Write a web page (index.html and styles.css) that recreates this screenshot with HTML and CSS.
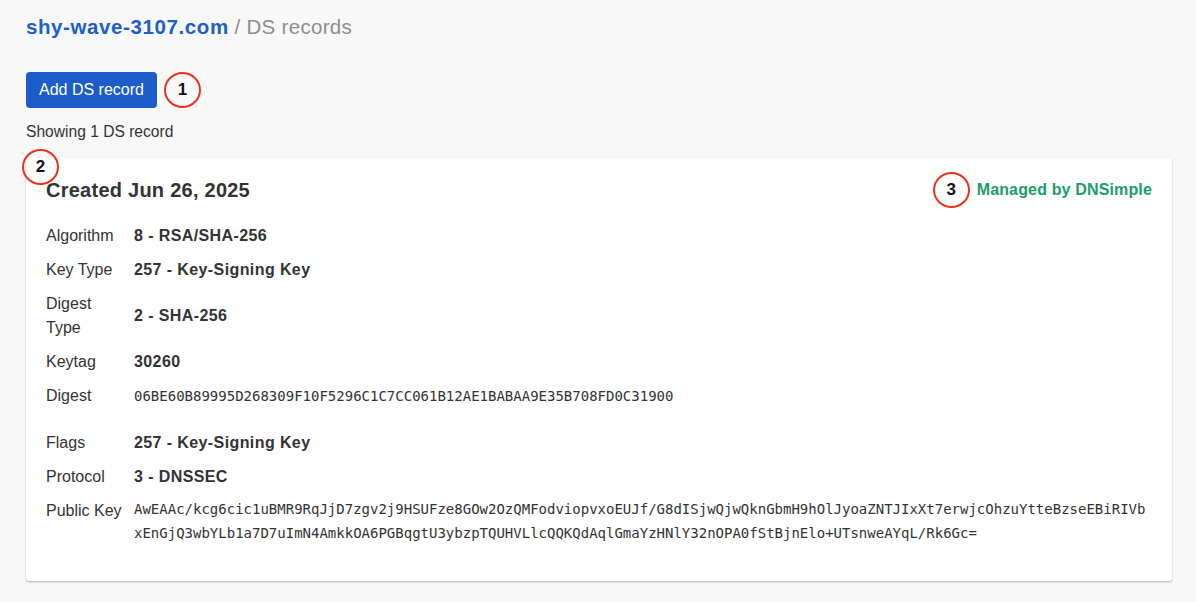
FILE: index.html
```html
<!DOCTYPE html>
<html lang="en">
<head>
<meta charset="utf-8">
<title>DS records</title>
<link rel="stylesheet" href="styles.css">
</head>
<body>
<main class="page">
  <h1 class="crumbs"><a class="crumbs-link" href="#">shy-wave-3107.com</a> <span class="crumbs-sep">/ DS records</span></h1>

  <div class="actions">
    <button class="btn" type="button">Add DS record</button>
    <span class="marker">1</span>
  </div>

  <p class="count">Showing 1 DS record</p>

  <section class="card">
    <span class="marker marker-card">2</span>
    <header class="card-head">
      <h2 class="card-title">Created Jun 26, 2025</h2>
      <div class="managed">
        <span class="marker">3</span>
        <span class="managed-text">Managed by DNSimple</span>
      </div>
    </header>

    <dl class="fields">
      <div class="row"><dt>Algorithm</dt><dd class="strong">8 - RSA/SHA-256</dd></div>
      <div class="row"><dt>Key Type</dt><dd class="strong">257 - Key-Signing Key</dd></div>
      <div class="row"><dt>Digest Type</dt><dd class="strong">2 - SHA-256</dd></div>
      <div class="row"><dt>Keytag</dt><dd class="strong">30260</dd></div>
      <div class="row"><dt>Digest</dt><dd class="mono">06BE60B89995D268309F10F5296C1C7CC061B12AE1BABAA9E35B708FD0C31900</dd></div>
    </dl>

    <dl class="fields fields-key">
      <div class="row"><dt>Flags</dt><dd class="strong">257 - Key-Signing Key</dd></div>
      <div class="row"><dt>Protocol</dt><dd class="strong">3 - DNSSEC</dd></div>
      <div class="row row-top"><dt>Public Key</dt><dd class="mono mono-key">AwEAAc/kcg6cic1uBMR9RqJjD7zgv2j9HSUFze8GOw2OzQMFodviopvxoEUJf/G8dISjwQjwQknGbmH9hOlJyoaZNTJIxXt7erwjcOhzuYtteBzseEBiRIVbxEnGjQ3wbYLb1a7D7uImN4AmkkOA6PGBqgtU3ybzpTQUHVLlcQQKQdAqlGmaYzHNlY32nOPA0fStBjnElo+UTsnweAYqL/Rk6Gc=</dd></div>
    </dl>
  </section>
</main>
</body>
</html>
```

FILE: styles.css
```css
* { box-sizing: border-box; }

html, body {
  margin: 0;
  background: #f8f8f8;
  color: #333;
  font-family: "Liberation Sans", Arial, sans-serif;
  font-size: 16px;
}

.page {
  padding: 15px 24px 20px 26px;
}

.crumbs {
  margin: 0;
  font-size: 20.5px;
  line-height: 24px;
  font-weight: 400;
}

.crumbs-link {
  color: #1d5fc9;
  font-weight: 700;
  text-decoration: none;
  letter-spacing: 0.6px;
}

.crumbs-sep {
  color: #8e8e8e;
  letter-spacing: 0.3px;
}

.actions {
  display: flex;
  align-items: center;
  gap: 7px;
  margin-top: 33px;
}

.btn {
  height: 36px;
  padding: 0 13px;
  border: 0;
  border-radius: 4px;
  background: #1c5dc9;
  color: #fff;
  font-family: inherit;
  font-size: 16px;
}

.marker {
  display: inline-flex;
  align-items: center;
  justify-content: center;
  width: 37px;
  height: 36px;
  border: 2px solid #e8341c;
  border-radius: 50%;
  color: #111;
  font-size: 17px;
  font-weight: 700;
  background: transparent;
  flex: none;
}

.count {
  margin: 13px 0 0;
  line-height: 22px;
  font-size: 15.6px;
}

.card {
  position: relative;
  margin-top: 15px;
  background: #fff;
  border-radius: 3px;
  box-shadow: 0 1px 2px rgba(0, 0, 0, 0.28);
  padding: 20px 20px 36px;
}

.marker-card {
  position: absolute;
  left: -4px;
  top: -9px;
}

.card-head {
  display: flex;
  align-items: center;
  justify-content: space-between;
  height: 24px;
}

.card-title {
  margin: 0;
  font-size: 20px;
  line-height: 24px;
  font-weight: 700;
  letter-spacing: 0.25px;
}

.managed {
  display: flex;
  align-items: center;
  gap: 7px;
}

.managed-text {
  color: #1a9e6a;
  font-weight: 700;
  font-size: 16px;
  letter-spacing: 0.15px;
}

.fields {
  margin: 22px 0 0;
  display: flex;
  flex-direction: column;
  gap: 10px;
}

.fields-key {
  margin-top: 23px;
}

.row {
  display: grid;
  grid-template-columns: 80px 1fr;
  column-gap: 8px;
  align-items: center;
  line-height: 24px;
}

.row-top {
  align-items: start;
}

.row dt {
  margin: 0;
}

.row dd {
  margin: 0;
  min-width: 0;
}

.strong {
  font-weight: 700;
  letter-spacing: 0.4px;
}

.mono {
  font-family: "DejaVu Sans Mono", Menlo, monospace;
  font-size: 14px;
  word-break: break-all;
  color: #333;
}

.mono-key {
  margin-top: -2px !important;
}
```
